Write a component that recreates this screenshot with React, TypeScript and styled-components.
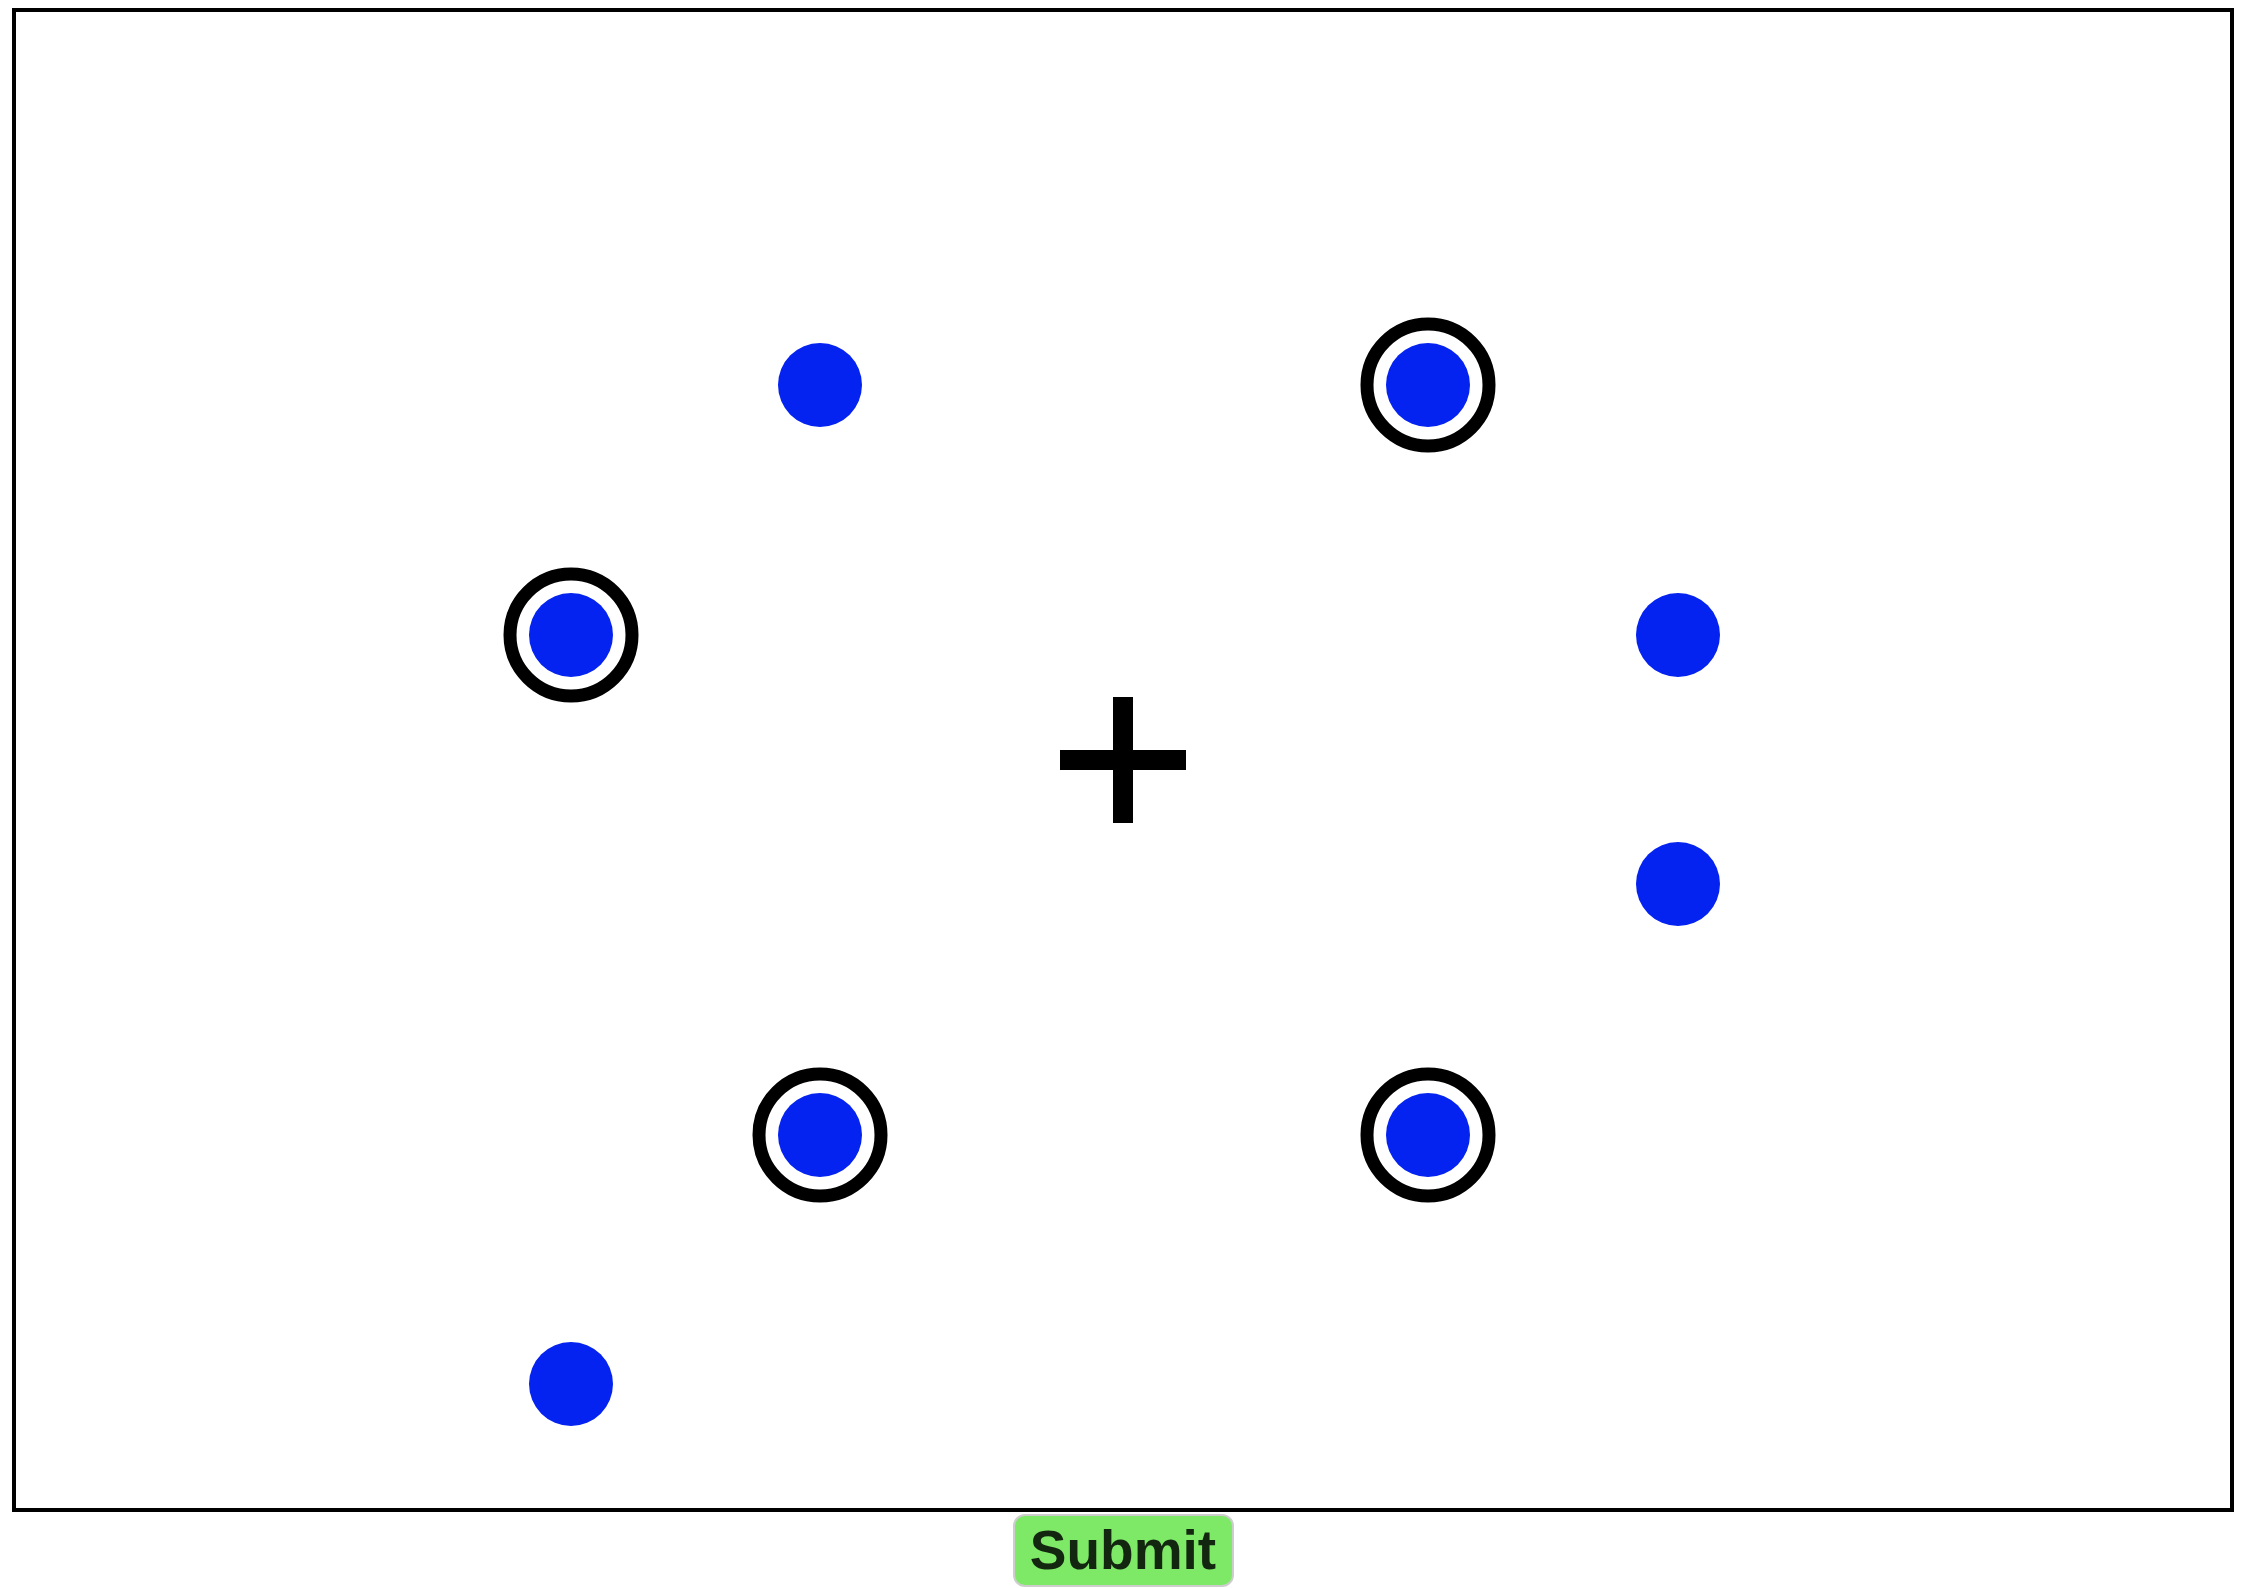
import React from 'react';
import styled, { createGlobalStyle } from 'styled-components';

const GlobalStyle = createGlobalStyle`
  body {
    margin: 8px;
    background: #ffffff;
    font-family: "Liberation Sans", Arial, sans-serif;
  }
`

const Page = styled.div`
  display: flex;
  flex-direction: column;
  align-items: center;
`

const Canvas = styled.div`
  position: relative;
  width: 2214px;
  height: 1496px;
  border: 4px solid #000;
  background: #fff;
`

// one stimulus: a blue dot, optionally with a black ring round it
const Stimulus = styled.svg<{ $x: number; $y: number }>`
  position: absolute;
  left: ${p => p.$x - 70}px;
  top: ${p => p.$y - 70}px;
  width: 140px;
  height: 140px;
  overflow: visible;
`

const Cross = styled.div`
  position: absolute;
  left: 1044px;
  top: 685px;
  width: 126px;
  height: 126px;
`

const CrossBar = styled.div<{ $vertical?: boolean }>`
  position: absolute;
  background: #000;
  ${p => p.$vertical
    ? 'left: 53px; top: 0; width: 20px; height: 126px;'
    : 'left: 0; top: 53px; width: 126px; height: 20px;'}
`

const SubmitButton = styled.button`
  box-sizing: border-box;
  margin-top: 2px;
  width: 221px;
  height: 73px;
  padding: 0;
  border: 2px solid #cdcdcd;
  border-radius: 12px;
  background: #7ee967;
  color: #13260f;
  font-family: "Liberation Sans", Arial, sans-serif;
  font-weight: bold;
  font-size: 55px;
  line-height: 1;
  cursor: pointer;
`

const stimuli = [
  { x: 803.5, y: 373, ring: false },
  { x: 1411.5, y: 373, ring: true },
  { x: 554.5, y: 623, ring: true },
  { x: 1662, y: 623, ring: false },
  { x: 1662, y: 872, ring: false },
  { x: 803.5, y: 1122.5, ring: true },
  { x: 1411.5, y: 1122.5, ring: true },
  { x: 554.5, y: 1372, ring: false },
]

function App() {
  return (
    <Page>
      <GlobalStyle />
      <Canvas>
        {stimuli.map((s, i) => (
          <Stimulus key={i} $x={s.x} $y={s.y} viewBox='0 0 140 140'>
            {s.ring && <circle cx='70' cy='70' r='61' fill='none' stroke='#000' strokeWidth='13' />}
            <circle cx='70' cy='70' r='42' fill='#0422f0' />
          </Stimulus>
        ))}
        <Cross>
          <CrossBar />
          <CrossBar $vertical />
        </Cross>
      </Canvas>
      <SubmitButton type='button'>Submit</SubmitButton>
    </Page>
  )
}

export default App;
